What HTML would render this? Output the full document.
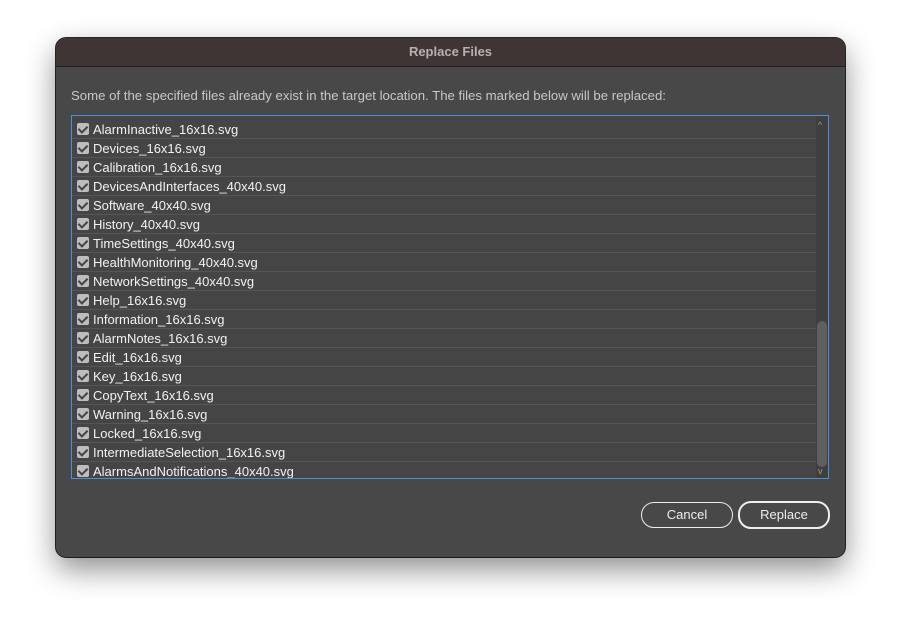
<!DOCTYPE html>
<html><head><style>
body{margin:0;width:901px;height:632px;background:#fff;font-family:"Liberation Sans",sans-serif;overflow:hidden;position:relative}
.dlg{position:absolute;left:56px;top:38px;width:789px;height:519px;background:#484848;border-radius:10px;box-shadow:0 12px 30px rgba(0,0,0,.45),0 0 0 1px #2a2a2a;overflow:hidden}
.tb{height:28px;background:#403535;border-bottom:1px solid #1e1e1e;color:#b8b0b0;font-weight:bold;font-size:13px;text-align:center;line-height:27px}
.msg{position:absolute;left:15px;top:50px;color:#c8c8c8;font-size:13.2px}
.list{position:absolute;left:15px;top:77px;width:756px;height:362px;border:1px solid #4a8fdc;background:#454545;overflow:hidden}
.row{position:absolute;left:0;width:744px;height:18px;border-bottom:1px solid #555;color:#f2f2f2;font-size:13px;line-height:19px}
.cb{position:absolute;left:5px;top:3px;width:12px;height:12px;background:#bdbdbd;border-radius:2px}
.cb:after{content:"";position:absolute;left:3px;top:1px;width:4px;height:7px;border:solid #444;border-width:0 2px 2px 0;transform:rotate(45deg)}
.row span{position:absolute;left:21px}
.sb{position:absolute;right:0;top:0;width:12px;height:362px;background:#3f3f3f}
.th{position:absolute;left:1px;top:205px;width:10px;height:146px;background:#5f5f5f;border-radius:5px}
.btn{position:absolute;top:464px;height:24px;border:1.5px solid #eee;border-radius:13px;color:#eee;font-size:13px;text-align:center;line-height:24px}
</style></head><body>
<div class="dlg">
<div class="tb">Replace Files</div>
<div class="msg">Some of the specified files already exist in the target location. The files marked below will be replaced:</div>
<div class="list">
<div class="sb"><div style="position:absolute;left:2px;top:4px;color:#999;font-size:9px">^</div><div class="th"></div><div style="position:absolute;left:2px;bottom:2px;color:#999;font-size:9px">v</div></div>
<div class="row" style="top:4px"><i class="cb"></i><span>AlarmInactive_16x16.svg</span></div>
<div class="row" style="top:23px"><i class="cb"></i><span>Devices_16x16.svg</span></div>
<div class="row" style="top:42px"><i class="cb"></i><span>Calibration_16x16.svg</span></div>
<div class="row" style="top:61px"><i class="cb"></i><span>DevicesAndInterfaces_40x40.svg</span></div>
<div class="row" style="top:80px"><i class="cb"></i><span>Software_40x40.svg</span></div>
<div class="row" style="top:99px"><i class="cb"></i><span>History_40x40.svg</span></div>
<div class="row" style="top:118px"><i class="cb"></i><span>TimeSettings_40x40.svg</span></div>
<div class="row" style="top:137px"><i class="cb"></i><span>HealthMonitoring_40x40.svg</span></div>
<div class="row" style="top:156px"><i class="cb"></i><span>NetworkSettings_40x40.svg</span></div>
<div class="row" style="top:175px"><i class="cb"></i><span>Help_16x16.svg</span></div>
<div class="row" style="top:194px"><i class="cb"></i><span>Information_16x16.svg</span></div>
<div class="row" style="top:213px"><i class="cb"></i><span>AlarmNotes_16x16.svg</span></div>
<div class="row" style="top:232px"><i class="cb"></i><span>Edit_16x16.svg</span></div>
<div class="row" style="top:251px"><i class="cb"></i><span>Key_16x16.svg</span></div>
<div class="row" style="top:270px"><i class="cb"></i><span>CopyText_16x16.svg</span></div>
<div class="row" style="top:289px"><i class="cb"></i><span>Warning_16x16.svg</span></div>
<div class="row" style="top:308px"><i class="cb"></i><span>Locked_16x16.svg</span></div>
<div class="row" style="top:327px"><i class="cb"></i><span>IntermediateSelection_16x16.svg</span></div>
<div class="row" style="top:346px;border:0"><i class="cb"></i><span>AlarmsAndNotifications_40x40.svg</span></div>
</div>
<div class="btn" style="left:585px;width:90px">Cancel</div>
<div class="btn" style="left:682px;width:88px;border-width:2px;top:463px">Replace</div>
</div>
</body></html>
